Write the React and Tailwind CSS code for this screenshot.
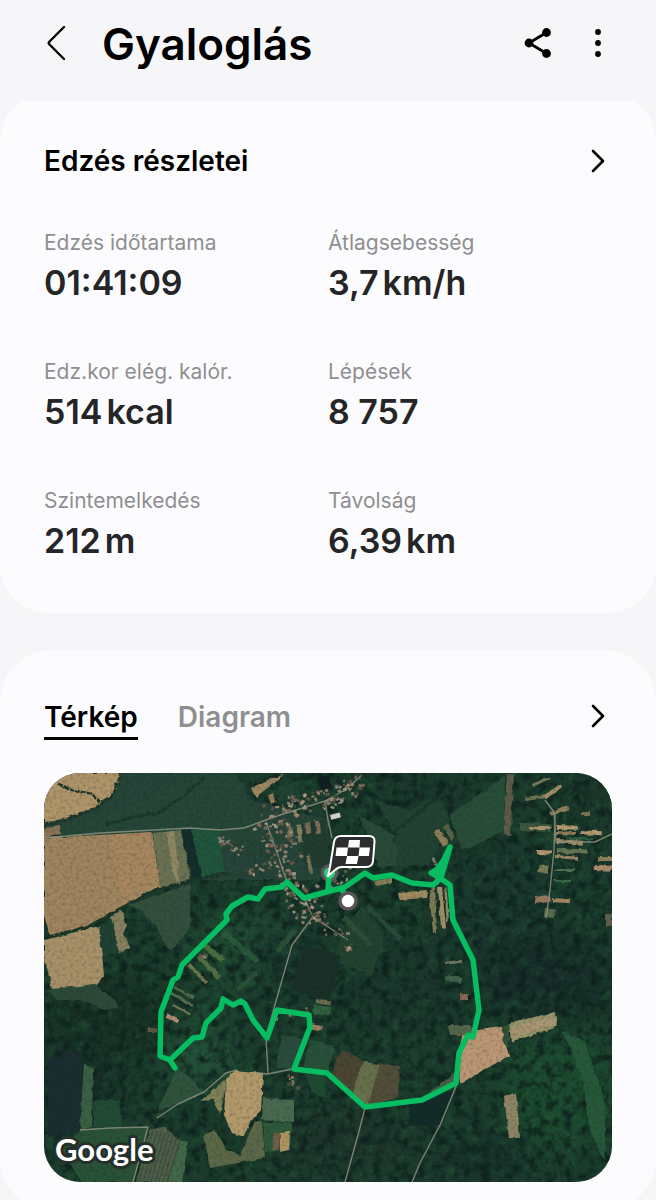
import { useState } from "react";

const stats = [
  { label: "Edzés időtartama", value: "01:41:09" },
  { label: "Átlagsebesség", value: "3,7", unit: "km/h" },
  { label: "Edz.kor elég. kalór.", value: "514", unit: "kcal" },
  { label: "Lépések", value: "8 757" },
  { label: "Szintemelkedés", value: "212", unit: "m" },
  { label: "Távolság", value: "6,39", unit: "km" },
];

// [fill, polygon points]
const fields = [
  ["#264438", "44,773 235,773 252,800 330,820 320,880 240,880 190,880 44,830"],
  ["#264637", "60,826 130,806 200,776 235,773 270,840 60,836"],
  ["#b0956a", "44,773 119,773 117,788 108,798 96,808 60,820 44,824"],
  ["#8e7556", "44,828 60,825 61,834 44,838"],
  ["#a0855f", "44,838 152,832 160,886 122,906 90,924 50,937 44,915"],
  ["#a6875f", "110,836 152,832 160,886 122,906"],
  ["#6b7254", "153,833 181,830 191,881 160,887"],
  ["#8f8862", "166,832 174,831 180,884 176,884"],
  ["#142e2b", "181,830 191,829 202,877 192,880"],
  ["#21553c", "191,829 220,830 224,873 202,877"],
  ["#34503d", "128,905 190,884 190,930 170,952 155,925 140,910"],
  ["#1f4133", "99,926 112,918 119,952 104,958"],
  ["#85805f", "111,916 121,909 127,925 123,934 130,948 119,952"],
  ["#a89169", "44,940 99,926 104,975 101,980 96,986 52,989 44,955"],
  ["#2d4a38", "48,990 95,984 115,1000 119,1008 104,1010 80,1000 55,1000"],
  ["#1b2d31", "48,1060 82,1050 81,1130 48,1138"],
  ["#3a6043", "84,1062 93,1069 92,1127 80,1130"],
  ["#214b35", "94,1100 120,1100 122,1127 94,1128"],
  ["#2a5238", "80,1130 148,1127 133,1182 82,1182 60,1150"],
  ["#4f5f4a", "150,1129 165,1128 180,1140 168,1182 136,1182"],
  ["#426849", "180,1140 188,1143 182,1182 168,1182"],
  ["#30533c", "176,1068 190,1078 205,1092 178,1104 156,1116"],
  ["#7e8059", "200,1101 225,1080 226,1085 220,1115 213,1100"],
  ["#b39a6b", "226,1078 236,1070 263,1073 261,1110 250,1122 244,1137 232,1133 224,1115"],
  ["#5c6848", "204,1135 215,1130 226,1150 240,1155 255,1120 262,1122 265,1158 210,1168"],
  ["#4a6a50", "263,1098 294,1100 294,1122 262,1119"],
  ["#2e593b", "263,1122 292,1122 290,1150 265,1152"],
  ["#b19360", "280,1133 290,1132 289,1150 280,1152"],
  ["#725f49", "274,1132 280,1132 279,1150 272,1150"],
  ["#2a4c3c", "282,1035 306,1040 296,1068 276,1068"],
  ["#28503a", "310,1040 335,1046 328,1072 303,1068"],
  ["#1d4b32", "305,1073 326,1076 325,1098 312,1092"],
  ["#4b4534", "342,1050 363,1060 351,1098 330,1076"],
  ["#68704b", "363,1060 379,1066 369,1105 351,1096"],
  ["#524d3a", "379,1064 400,1066 398,1098 369,1105"],
  ["#bb9774", "463,1032 501,1027 509,1056 460,1083 458,1055"],
  ["#315238", "502,1027 509,1024 509,1048 504,1044"],
  ["#96956a", "509,1023 555,1012 557,1028 511,1042"],
  ["#a89571", "512,1027 553,1016 555,1025 511,1038"],
  ["#8e8565", "504,1096 516,1093 520,1138 509,1138"],
  ["#465f45", "430,1091 456,1072 455,1083 432,1096"],
  ["#122b29", "412,1102 454,1090 440,1125 408,1126"],
  ["#27583a", "562,1030 585,1042 606,1105 604,1160 590,1130 583,1080"],
  ["#284e39", "450,814 505,777 504,830 480,843 462,850"],
  ["#5d5b49", "507,774 513,774 511,836 503,834"],
  ["#2a4a38", "360,815 398,838 398,866 378,866"],
  ["#234234", "395,832 375,800 410,810 440,800 450,820 430,865 398,866"],
  ["#234230", "362,905 385,935 372,975 330,960 345,930"],
  ["#1a3029", "305,945 340,955 330,1000 290,990"],
  ["#9d8763", "251,789 284,773 278,780 256,797"],
  ["#9c8058", "268,795 273,792 275,802 271,804"],
  ["#1f4434", "277,785 296,783 302,797 280,801"],
  ["#101f20", "317,779 330,776 332,788 320,791"],
  ["#213d30", "296,826 325,820 330,865 305,870"],
  ["#7e7a56", "429,890 435,888 437,932 433,933"],
  ["#a28f6a", "438,888 442,888 446,927 441,928"],
  ["#8b8661", "444,887 447,892 449,920 447,922"],
  ["#8d7e58", "434,832 440,830 449,843 443,847"],
  ["#566548", "448,823 455,838 451,841 444,827"],
  ["#a08b60", "398,893 427,890 426,898 400,900"],
  ["#847f56", "374,880 392,877 392,883 376,886"],
  ["#53664b", "448,1025 470,1025 472,1035 450,1035"],
];

// narrow garden strips on the east side and near the paths: [x, y, w, h, angle, fill]
const strips = [
  [525, 797, 22, 4, -8, "#6d7553"], [543, 796, 20, 4, -35, "#a48e68"], [550, 811, 18, 4, -18, "#907c59"],
  [532, 784, 18, 3, -25, "#797c59"], [520, 823, 31, 8, 2, "#3c5740"], [529, 827, 21, 3, 0, "#aa946d"],
  [556, 825, 22, 4, 2, "#b59a70"], [556, 831, 20, 4, 3, "#907c58"], [580, 830, 22, 4, 3, "#b69771"],
  [557, 839, 26, 4, 4, "#a28b66"], [537, 850, 15, 4, 2, "#b4976f"], [557, 848, 30, 5, 3, "#667451"],
  [556, 855, 23, 3, 5, "#9a8762"], [540, 864, 9, 8, 12, "#7b7d58"], [598, 857, 14, 4, 0, "#8c805a"],
  [594, 865, 18, 5, 2, "#aa8a6c"], [555, 869, 20, 2, 0, "#52724d"], [535, 897, 15, 7, -10, "#98795f"],
  [553, 898, 17, 4, 4, "#a48862"], [545, 908, 10, 9, 8, "#5c6a4c"], [582, 811, 8, 4, 0, "#806e56"],
  [569, 838, 24, 2, 0, "#315c40"], [605, 914, 7, 12, 0, "#60604d"], [553, 880, 18, 2, 0, "#3b6746"],
  [175, 986, 22, 3, 30, "#53674a"], [172, 992, 25, 3, 30, "#587052"], [168, 1013, 13, 5, 28, "#b38d70"],
  [173, 1004, 20, 2, 28, "#78795b"], [148, 1028, 9, 4, 0, "#5f5747"], [200, 955, 30, 5, 45, "#556e43"],
  [190, 963, 26, 4, 45, "#6f764d"], [203, 941, 28, 5, 38, "#4b703f"], [225, 930, 45, 6, 40, "#28593a"],
  [275, 950, 28, 5, -50, "#2a5238"], [235, 988, 26, 5, -40, "#2a5237"], [345, 915, 40, 5, 45, "#2d4f39"],
  [370, 905, 46, 5, 45, "#29493a"], [316, 999, 15, 4, 5, "#6a6b4e"], [314, 1005, 16, 9, 5, "#31613f"],
  [310, 1024, 13, 5, 10, "#9a805d"], [296, 825, 5, 18, -8, "#857f5e"], [305, 823, 5, 11, -6, "#7f6b57"],
  [315, 821, 5, 13, -4, "#806f58"], [286, 823, 4, 14, -12, "#80765a"], [306, 856, 4, 18, -10, "#747052"],
  [447, 975, 16, 5, 12, "#416549"], [445, 962, 18, 3, -8, "#76785a"], [460, 994, 8, 6, 0, "#8a6655"],
];

const roads = [
  "M44 838 L100 833 L190 828 L220 830 L244 828 L266 820 L280 815 L325 801 L345 790 L362 775",
  "M266 822 L274 844 L286 879 L305 900 L313 917 L348 940",
  "M325 802 L328 820 L332 838",
  "M312 918 L292 945 L282 980 L274 1008 L266 1038 L268 1073",
  "M256 1073 L268 1074 L292 1069",
  "M365 1108 L358 1135 L345 1182",
  "M457 1084 L440 1125 L420 1163 L412 1182",
  "M555 815 L554 850 L550 890 L546 918",
  "M545 800 L554 812 L556 842 L595 842 L612 834",
  "M157 1118 L178 1104 L204 1092 L226 1073 L237 1070",
  "M80 1130 L110 1128 L148 1127 L133 1182",
];

const hedges = [
  "M44 825 L70 818 L96 808 L112 796 L120 775",
  "M58 784 L72 790 L90 794 L100 802",
  "M105 825 L130 818 L160 812 L185 795 L205 777",
  "M48 937 L90 926 L122 908 L155 890 L192 880 L228 873",
  "M158 1112 L175 1106 L190 1108 L204 1122 L232 1142",
  "M394 842 L396 830 L420 812 L436 798",
  "M448 868 L465 850 L490 842 L506 838",
  "M508 1044 L540 1034 L572 1022 L612 1008",
];

const route =
  "M347 898 L341 888 M329 874 L328 890 M175 1068 L170 1060 L160 1056 L161 1012 L173 980 L178 977 L182 965 L227 920 " +
  "L226 914 L232 906 L248 897 L258 899 L265 889 L282 887 L287 882 L304 898 L345 887 L365 873 L373 878 " +
  "L392 875 L412 883 L433 885 L441 878 L450 847 L440 868 L431 873 L437 876 L450 885 L453 920 L473 960 L479 1010 L473 1037 " +
  "L468 1035 L459 1053 L456 1083 L422 1100 L365 1107 L327 1073 L294 1069 L310 1027 L309 1015 L277 1010 " +
  "L267 1038 L253 1020 L245 1004 L241 1001 L233 1005 L223 999 L221 1008 L206 1023 L202 1037 L193 1038 L170 1060";

// small seeded generator so that the houses keep their places
function makeHouses() {
  const lines = [
    [262, 818, 325, 797, 24, 70],
    [325, 800, 360, 778, 18, 50],
    [264, 824, 290, 890, 20, 75],
    [290, 890, 312, 915, 26, 60],
    [312, 915, 350, 945, 12, 28],
    [245, 872, 275, 862, 8, 16],
    [286, 825, 300, 858, 8, 18],
    [318, 888, 355, 870, 18, 24],
    [215, 835, 240, 850, 10, 18],
    [276, 1016, 310, 1010, 10, 12],
    [285, 1075, 296, 1088, 8, 10],
    [436, 852, 440, 885, 9, 12],
    [196, 958, 203, 955, 4, 5],
  ];
  const colors = ["#a9846f", "#8d695b", "#a8927c", "#8b9085", "#64594c", "#b5a692", "#394b36", "#785847"];
  let seed = 11;
  const rand = () => {
    seed = (seed * 16807) % 2147483647;
    return seed / 2147483647;
  };
  const out = [];
  lines.forEach(([x1, y1, x2, y2, spread, count]) => {
    for (let i = 0; i < count; i++) {
      const t = rand();
      out.push({
        x: x1 + (x2 - x1) * t + (rand() - 0.5) * spread,
        y: y1 + (y2 - y1) * t + (rand() - 0.5) * spread,
        w: 1.5 + rand() * 3,
        h: 1.5 + rand() * 2,
        a: rand() * 70 - 35,
        c: colors[Math.floor(rand() * colors.length)],
      });
    }
  });
  return out;
}

const houses = makeHouses();

function RouteMap() {
  return (
    <svg viewBox="44 773 568 409" className="block h-auto w-full rounded-[36px]" role="img" aria-label="Útvonal térképe">
      <defs>
        <filter id="leaves" x="0" y="0" width="100%" height="100%" colorInterpolationFilters="sRGB">
          <feTurbulence type="fractalNoise" baseFrequency="0.11" numOctaves="5" seed="4" />
          <feColorMatrix values="0 0 0 0 0.05  0 0 0 0 0.12  0 0 0 0 0.11  3 0 0 0 -1.3" />
        </filter>
        <filter id="glints" x="0" y="0" width="100%" height="100%" colorInterpolationFilters="sRGB">
          <feTurbulence type="fractalNoise" baseFrequency="0.09" numOctaves="5" seed="19" />
          <feColorMatrix values="0 0 0 0 0.15  0 0 0 0 0.36  0 0 0 0 0.22  0 3 0 0 -1.5" />
        </filter>
        <filter id="grain" x="0" y="0" width="100%" height="100%" colorInterpolationFilters="sRGB">
          <feTurbulence type="fractalNoise" baseFrequency="0.3" numOctaves="2" seed="8" />
          <feColorMatrix values="0 0 0 0 0.07  0 0 0 0 0.13  0 0 0 0 0.10  1.4 0 0 0 -0.6" />
        </filter>
        <filter id="soft" x="-50%" y="-50%" width="200%" height="200%" colorInterpolationFilters="sRGB">
          <feGaussianBlur stdDeviation="14" />
        </filter>
        <filter id="edge" colorInterpolationFilters="sRGB">
          <feTurbulence type="fractalNoise" baseFrequency="0.12" numOctaves="2" seed="2" result="n" />
          <feDisplacementMap in="SourceGraphic" in2="n" scale="4" xChannelSelector="R" yChannelSelector="G" />
          <feGaussianBlur stdDeviation="0.4" />
        </filter>
      </defs>

      {/* forest */}
      <rect x="44" y="773" width="568" height="409" fill="#1c3d2e" />
      <g filter="url(#soft)">
        <ellipse cx="110" cy="1020" rx="60" ry="45" fill="#193427" />
        <ellipse cx="70" cy="1090" rx="40" ry="40" fill="#182f2b" />
        <ellipse cx="250" cy="950" rx="60" ry="40" fill="#224d35" />
        <ellipse cx="290" cy="960" rx="40" ry="35" fill="#1c3a30" />
        <ellipse cx="500" cy="920" rx="45" ry="70" fill="#1c382f" />
        <ellipse cx="550" cy="980" rx="70" ry="40" fill="#192f2b" />
        <ellipse cx="400" cy="990" rx="60" ry="60" fill="#1c382d" />
        <ellipse cx="340" cy="1140" rx="70" ry="30" fill="#1e362c" />
        <ellipse cx="560" cy="1090" rx="60" ry="60" fill="#1d4c31" />
        <ellipse cx="480" cy="1160" rx="45" ry="18" fill="#182e2b" />
        <ellipse cx="200" cy="1060" rx="40" ry="25" fill="#245239" />
        <ellipse cx="200" cy="1020" rx="30" ry="20" fill="#214a34" />
        <ellipse cx="430" cy="800" rx="60" ry="30" fill="#1c382d" />
        <ellipse cx="590" cy="790" rx="40" ry="20" fill="#1c372b" />
      </g>
      <rect x="44" y="773" width="568" height="409" filter="url(#glints)" opacity="0.45" />
      <rect x="44" y="773" width="568" height="409" filter="url(#leaves)" opacity="0.8" />

      {/* fields and gardens */}
      <g filter="url(#edge)">
        {fields.map(([fill, points], i) => (
          <polygon key={i} points={points} fill={fill} />
        ))}
        {strips.map(([x, y, w, h, a, fill], i) => (
          <rect key={i} x={x} y={y} width={w} height={h} fill={fill} transform={`rotate(${a} ${x} ${y})`} />
        ))}
      </g>
      <g stroke="#34483a" strokeWidth="1" opacity="0.8">
        {[0, 1, 2, 3, 4, 5, 6, 7].map((i) => (
          <path key={i} d={`M${153 + i * 4} ${1130 + i} L${139 + i * 4} 1182`} />
        ))}
      </g>
      <rect x="44" y="773" width="568" height="409" filter="url(#grain)" opacity="0.35" />

      <g fill="none" stroke="#1a3427" strokeWidth="3" strokeDasharray="5 1" filter="url(#edge)">
        {hedges.map((d) => (
          <path key={d} d={d} />
        ))}
      </g>
      <g fill="none" stroke="#8b907f" strokeWidth="1.4" strokeLinejoin="round" opacity="0.85">
        {roads.map((d) => (
          <path key={d} d={d} />
        ))}
      </g>
      {houses.map((h, i) => (
        <rect key={i} x={h.x} y={h.y} width={h.w} height={h.h} fill={h.c} opacity="0.8" transform={`rotate(${h.a} ${h.x} ${h.y})`} />
      ))}
      <rect x="330" y="815" width="10" height="5" fill="#cfd0c8" transform="rotate(-15 330 815)" />

      {/* start and finish rings */}
      <circle cx="329.500" cy="873" r="7" fill="#fff" stroke="#575757" strokeWidth="4" />
      <path d={route} fill="none" stroke="#07bd62" strokeWidth="5.500" strokeLinejoin="round" strokeLinecap="round" />
      <path d="M450 847 L431 873 L441 879 Z" fill="#07bd62" />
      <circle cx="329.500" cy="873" r="5.500" fill="#2ccb7c" />
      <circle cx="348" cy="901" r="8" fill="#fff" stroke="#575453" strokeWidth="3.500" />

      {/* finish flag */}
      <path
        d="M341 836 H369 Q375 836 374.500 842 L373 861 Q372.500 867 366 867 H342 Q338 867 335 870 L328 876 L330 867 L334 842 Q335 836 341 836 Z"
        fill="#2d2d2f"
        stroke="#fff"
        strokeWidth="2"
        strokeLinejoin="round"
      />
      <path
        d="M349 840 H360 L359.500 847.500 H348 Z M336.500 847.500 H348 L347 856 H335.500 Z M359.500 847.500 H370 L369 856 H358.500 Z M347 856 H358.500 L357 864 H345.500 Z"
        fill="#fff"
      />

      <text
        x="55"
        y="1161"
        className="font-['Lato',sans-serif] text-[31px] font-bold"
        fill="#fff"
        stroke="#26302a"
        strokeWidth="6"
        strokeLinejoin="round"
        paintOrder="stroke"
      >
        Google
      </text>
    </svg>
  );
}

function ChevronRight() {
  return (
    <svg width="16" height="26" viewBox="0 0 16 26" fill="none" stroke="#000" strokeWidth="2.6" strokeLinecap="round" strokeLinejoin="round">
      <path d="M3 3 L13 13 L3 23" />
    </svg>
  );
}

function Header() {
  return (
    <header className="flex h-[101px] shrink-0 items-start pt-4 pr-10 pl-10">
      <button aria-label="Vissza" className="flex h-[54px] w-8 items-center justify-center">
        <svg width="22" height="36" viewBox="0 0 22 36" fill="none" stroke="#000" strokeWidth="2.4" strokeLinecap="round" strokeLinejoin="round">
          <path d="M19 2 L4.500 16.500 Q3 18 4.500 19.500 L19 34" />
        </svg>
      </button>
      <h1 className="ml-[30px] text-[44px] leading-[56px] font-semibold text-black">Gyaloglás</h1>
      <div className="ml-auto flex h-[54px] items-center gap-6">
        <button aria-label="Megosztás" className="flex size-9 items-center justify-center">
          <svg width="28" height="32" viewBox="0 0 28 32" fill="#000">
            <path d="M22.500 5.500 L5 16 L22.500 26.500" fill="none" stroke="#000" strokeWidth="2.8" />
            <circle cx="5" cy="16" r="4.400" />
            <circle cx="22.500" cy="5.500" r="4.400" />
            <circle cx="22.500" cy="26.500" r="4.400" />
          </svg>
        </button>
        <button aria-label="További lehetőségek" className="flex size-9 items-center justify-center">
          <svg width="8" height="30" viewBox="0 0 8 30" fill="#000">
            <circle cx="4" cy="4" r="2.900" />
            <circle cx="4" cy="15" r="2.900" />
            <circle cx="4" cy="26" r="2.900" />
          </svg>
        </button>
      </div>
    </header>
  );
}

function App() {
  const [tab, setTab] = useState("Térkép");

  return (
    <div className="flex h-screen flex-col bg-[#f6f6f8] font-['Inter',sans-serif]">
      <Header />

      <main className="min-h-0 flex-1 overflow-y-auto [scrollbar-width:none]">
        <div className="overflow-hidden">
          <section className="-mt-2 rounded-[48px] bg-[#fcfcfe] px-11 pt-12 pb-12">
            <div className="flex h-10 items-center justify-between">
              <h2 className="text-[28px] leading-10 font-semibold text-black">Edzés részletei</h2>
              <button aria-label="Edzés részletei megnyitása" className="mr-1.5">
                <ChevronRight />
              </button>
            </div>
            <dl className="mt-[46px] grid grid-cols-2 gap-y-[49px]">
              {stats.map((s) => (
                <div key={s.label}>
                  <dt className="text-[21px] leading-8 text-[#8f8f91]">{s.label}</dt>
                  <dd className="flex gap-1 text-[34px] leading-[48px] font-semibold text-[#252528]">
                    <span>{s.value}</span>
                    {s.unit && <span>{s.unit}</span>}
                  </dd>
                </div>
              ))}
            </dl>
          </section>
        </div>

        <section className="mt-[37px] rounded-[52px] bg-[#fcfcfe] px-11 pt-[46px] pb-7">
          <div className="flex h-11 items-start justify-between">
            <div role="tablist" className="flex gap-10">
              {["Térkép", "Diagram"].map((name) => (
                <button
                  key={name}
                  role="tab"
                  aria-selected={tab === name}
                  onClick={() => setTab(name)}
                  className={`h-11 border-b-3 text-[28px] leading-10 font-semibold ${
                    tab === name ? "border-black text-black" : "border-transparent text-[#8f8f91]"
                  }`}
                >
                  {name}
                </button>
              ))}
            </div>
            <button aria-label="Térkép megnyitása" className="mt-[7px] mr-1.5">
              <ChevronRight />
            </button>
          </div>
          <div className="mt-[33px]">
            <RouteMap />
          </div>
        </section>
      </main>
    </div>
  );
}

export default App;
